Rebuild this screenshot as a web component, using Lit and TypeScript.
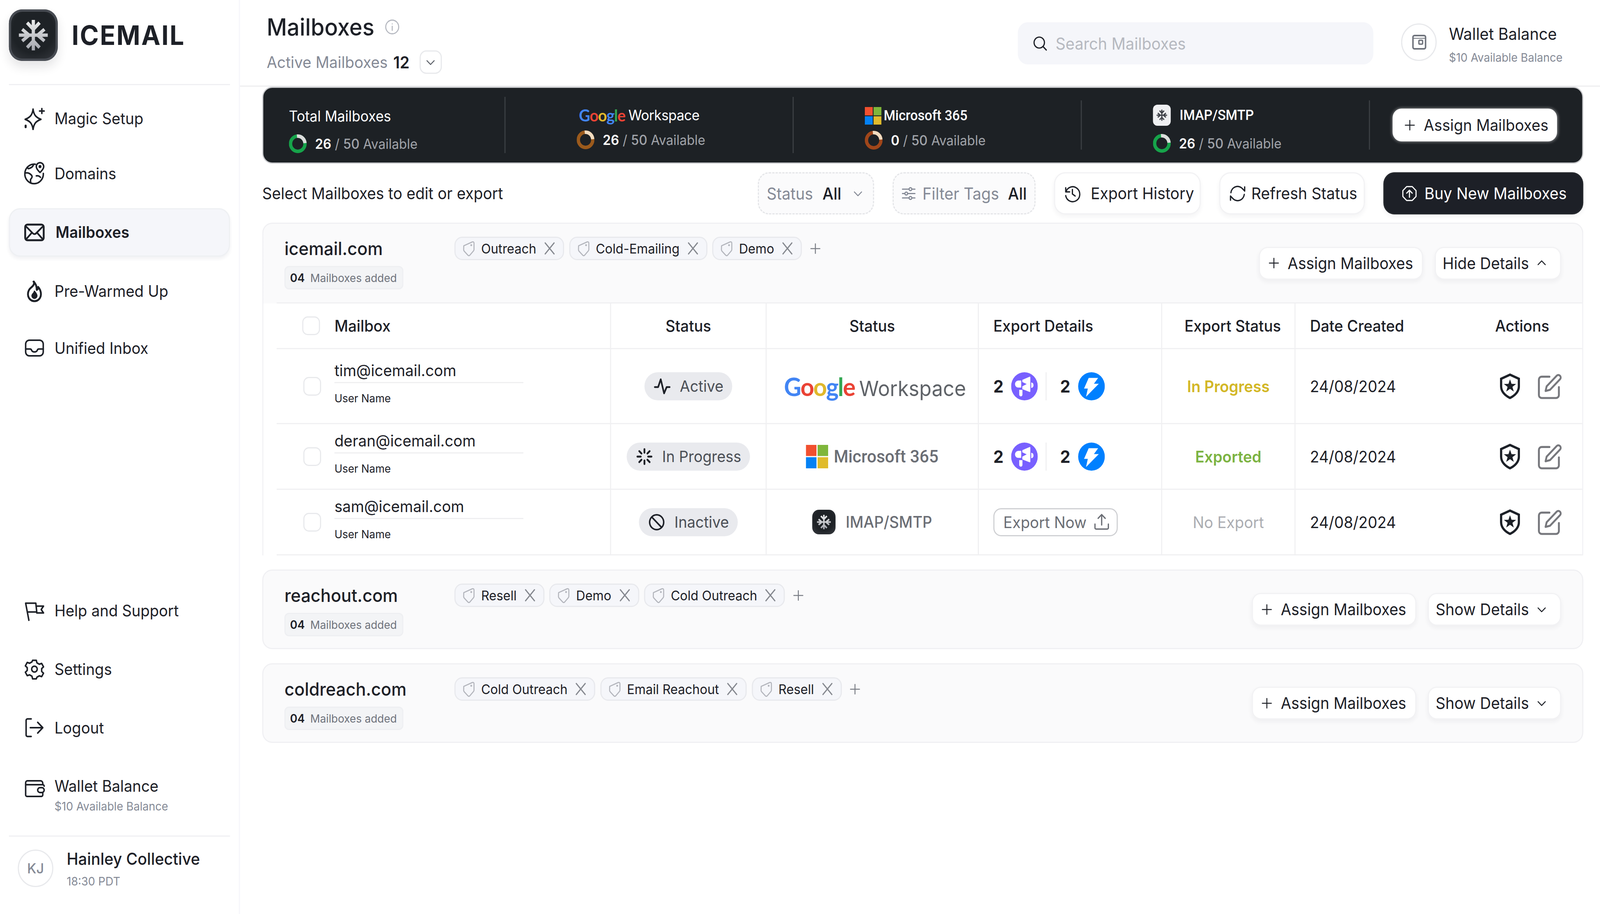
import {LitElement, css, html, svg, nothing} from 'lit';
import {customElement} from 'lit/decorators.js';

const ic = (size: number, body: unknown, vb = 24) =>
  html`<svg class="ic" width=${size} height=${size} viewBox="0 0 ${vb} ${vb}" fill="none" stroke="currentColor" stroke-width="1.6" stroke-linecap="round" stroke-linejoin="round">${body}</svg>`;

const icons = {
  magic: svg`<path d="M10.500 2.500c.8 6 3 8.500 8.500 10.500-5.500 2-7.700 4.500-8.500 10.500C9.700 17.500 7.500 15 2 13c5.500-2 7.700-4.500 8.500-10.500Z"/><path d="M20 2v5M17.500 4.500h5"/><path d="M2.500 19.500v1.500" stroke-width="2.200"/>`,
  globe: svg`<path d="M13 2.600A10 10 0 1 0 21.600 12"/><path d="M2.500 11.500c2.500-.5 4.500.5 6 2 1.500 1.300 1 3-.2 4-.8.8-.6 2-.3 3.800"/><path d="M11 2.800c-.5 2-1.500 3-3.500 3.700C6 7 5 8 4.500 5.500"/><path d="M14 14.500c2-.3 3.500.3 4.500 1.500"/><path d="M18 11s-4-3.300-4-6a4 4 0 0 1 8 0c0 2.700-4 6-4 6Z"/><circle cx="18" cy="5" r=".8"/>`,
  mail: svg`<rect x="2" y="4" width="20" height="16" rx="2.500" stroke-width="2"/><path d="m2.500 5.500 7.800 7.500a2.500 2.500 0 0 0 3.400 0l7.800-7.500M2.800 19.200 9 12.500M21.200 19.200 15 12.500" stroke-width="1.800"/>`,
  fire: svg`<path d="M11.500 2c.5 3-1 4.500-3 6C5.500 10.200 5 12.500 5 15a7 7 0 0 0 14 0c0-3-1-5.500-3-7.500 0 1.500-.5 2.500-1.500 3 0-3.500-1-6.500-3.500-8.500Z" stroke-width="2"/><path d="M12 12c.3 1.500-2.500 2.500-2.500 4.500a2.500 2.500 0 0 0 5 0c0-1.800-1.500-3-2.500-4.500Z" fill="currentColor"/>`,
  inbox: svg`<rect x="2.500" y="4" width="19" height="16" rx="4"/><path d="M2.500 13h4.800c.8 0 1.300.5 1.600 1.200.4 1 1.600 1.800 3.100 1.800s2.700-.8 3.100-1.800c.3-.7.8-1.200 1.600-1.200h4.800"/>`,
  flag: svg`<path d="M6 22 2.500 4.500h11l1 9h-9"/><path d="M13.800 7.500h8l-2.500 3.500 2.500 3.500h-7.300"/>`,
  gear: svg`<circle cx="12" cy="12" r="3"/><path d="M10 3h4l.7 2.600 2.500 1.400 2.600-.8 2 3.500-2 1.800v2.900l2 1.800-2 3.500-2.600-.8-2.500 1.400L14 22h-4l-.7-2.700-2.500-1.400-2.600.8-2-3.500 2-1.800v-2.900l-2-1.800 2-3.500 2.600.8 2.500-1.400L10 3Z"/>`,
  logout: svg`<path d="M8.500 3H4.500A1.500 1.500 0 0 0 3 4.500v15A1.500 1.500 0 0 0 4.500 21h4"/><path d="M7.500 12H21M15.500 6.500 21 12l-5.500 5.500"/>`,
  wallet: svg`<path d="M21 8V6.500A2.500 2.500 0 0 0 18.500 4H4.500A2 2 0 0 0 2.500 6v12.500a1.500 1.500 0 0 0 1.500 1.500h15.500a1.500 1.500 0 0 0 1.500-1.500V16"/><path d="M2.500 8H21a1.500 1.500 0 0 1 1.500 1.500"/><rect x="15.500" y="11" width="7" height="5" rx="2.500"/>`,
  search: svg`<circle cx="11" cy="11" r="7"/><path d="m20.500 20.500-4.500-4.500"/>`,
  down: svg`<path d="m6 9.500 6 6 6-6"/>`,
  up: svg`<path d="m6 14.500 6-6 6 6"/>`,
  plus: svg`<path d="M12 4.500v15M4.500 12h15"/>`,
  close: svg`<path d="m6 5 12 14M18 5 6 19"/>`,
  history: svg`<path d="M3.500 5v5h5"/><path d="M3.800 10a9 9 0 1 1-.3 4.500"/><path d="M12 7v5.500l3.500 2.500"/>`,
  refresh: svg`<path d="M3.500 11a8.500 8.500 0 0 1 15-4.500L21 9V4"/><path d="M20.500 13a8.500 8.500 0 0 1-15 4.500L3 15v5"/>`,
  buy: svg`<path d="m8 2.500h8l5.500 5.500v8L16 21.500H8L2.500 16V8L8 2.500Z"/><path d="M12 17V8M8 11.500 12 7.500l4 4"/>`,
  sliders: svg`<path d="M3 6h9M17 6h4M3 12h3M11 12h10M3 18h9M17 18h4"/><circle cx="14.500" cy="6" r="2"/><circle cx="8.500" cy="12" r="2"/><circle cx="14.500" cy="18" r="2"/>`,
  pulse: svg`<path d="M2 13h4.500L10 3l4.500 18 3.500-8h4" stroke-width="2.200"/>`,
  spin: svg`<path d="M12 2.500v4.500M12 17v4.500M5 5l3 3M16 16l3 3M2.500 12H7M17 12h4.500M5 19l3-3M16 8l3-3" stroke-width="2.400"/>`,
  ban: svg`<circle cx="12" cy="12" r="9.500" stroke-width="2"/><path d="m5.500 5.500 13 13" stroke-width="2"/>`,
  info: svg`<circle cx="12" cy="12" r="10"/><path d="M12 11v6M12 7.500v.1"/>`,
  upload: svg`<path d="M3.500 14.500V19a1.500 1.500 0 0 0 1.500 1.500h14a1.500 1.500 0 0 0 1.500-1.500v-4.500"/><path d="M12 15.500V3.500M7.500 7.500 12 3l4.500 4.500"/>`,
  topWallet: svg`<rect x="4" y="3.500" width="17" height="17" rx="2" stroke-width="2"/><path d="M4 7h17" stroke-width="1"/><rect x="12" y="9.500" width="5" height="5" rx="1" stroke-width="1.800"/>`,
};

const snow = (size: number, id = 'snowfill') => html`<svg class="snow" width=${size} height=${size} viewBox="0 0 44 44" fill="none" stroke="url(#${id})" stroke-width="2.900">
  <defs>
    <linearGradient id="snowfill" gradientUnits="userSpaceOnUse" x1="0" y1="9" x2="0" y2="35"><stop offset="0" stop-color="#eceded"/><stop offset="1" stop-color="#a3a5ad"/></linearGradient>
    <linearGradient id="snowdark" gradientUnits="userSpaceOnUse" x1="0" y1="9" x2="0" y2="35"><stop offset="0" stop-color="#33363c"/><stop offset="1" stop-color="#4a4d54"/></linearGradient>
  </defs>
  <path d="M22 9v26M9 22h26M16.400 11.400 22 17l5.600-5.600M16.400 32.600 22 27l5.600 5.600M12 17l6.100 5L12 27M32 17l-6.100 5 6.100 5"/></svg>`;

const ring = (color: string, light: string) => html`<svg class="ring" width="16" height="16" viewBox="0 0 16 16" fill="none" stroke-width="3">
  <circle cx="8" cy="8" r="6.500" stroke=${color}/>
  <circle cx="8" cy="8" r="6.500" stroke=${light} pathLength="100" stroke-dasharray="24 76" transform="rotate(-90 8 8)"/></svg>`;

const msTiles = (size: number) => html`<svg class="ms" width=${size} height=${size} viewBox="0 0 20 20">
  <rect width="9.500" height="9.500" fill="#f1502f"/><rect x="10.500" width="9.500" height="9.500" fill="#7fb63b"/>
  <rect y="10.500" width="9.500" height="9.500" fill="#0481f4"/><rect x="10.500" y="10.500" width="9.500" height="9.500" fill="#e0bb2c"/></svg>`;

const googleWord = html`<span class="google"><b class="g1">G</b><b class="g2">o</b><b class="g3">o</b><b class="g1">g</b><b class="g4">l</b><b class="g2">e</b></span>`;

const megaphone = html`<svg class="badge" width="24" height="24" viewBox="0 0 24 24">
  <circle cx="12" cy="12" r="12" fill="#7860ff"/>
  <path fill="#fff" d="M10.100 6.500 16.600 3.800q.7-.2.7.500V16.300q0 .7-.7.500L10.100 14.400V12L14 10.100 10.100 8.300Z"/>
  <path fill="#fff" d="M9.100 7.100H6.500a3 3 0 0 0 0 6h2.600ZM18.100 8.700a2.600 2.400 0 0 1 0 4.700ZM7.300 15h2.900v4.100a1.450 1.450 0 0 1-2.900 0Z"/></svg>`;

const bolt = html`<svg class="badge" width="24" height="24" viewBox="0 0 24 24">
  <circle cx="12" cy="12" r="12" fill="#0080ff"/>
  <path fill="#fff" d="M9.500 4.800H18L14.200 9.800H18.600L7.100 20.900 8.700 13.900H5.300Z"/></svg>`;

const shield = html`<svg width="18" height="22" viewBox="0 0 18 22" fill="none">
  <path d="M9 1.100 17 4.600V11c0 4.300-3.300 7.800-8 9.900C4.300 18.800 1 15.300 1 11V4.600Z" stroke="#1c2027" stroke-width="2"/>
  <path fill="#1c2027" d="m9 5 1.400 3.900 4.100.1-3.300 2.500 1.200 4L9 13.200l-3.400 2.300 1.200-4L3.500 9l4.100-.1Z"/></svg>`;

const edit = html`<svg width="22" height="22" viewBox="0 0 22 22" fill="none" stroke="#77787d" stroke-width="1.700" stroke-linecap="round" stroke-linejoin="round">
  <path d="M10.500 2.800h-7A2.500 2.500 0 0 0 1 5.300v13.200A2.500 2.500 0 0 0 3.500 21h13a2.500 2.500 0 0 0 2.500-2.500v-6.800"/>
  <path d="M7 15l1-4 9-9a2 2 0 0 1 3 3l-9 9Z"/></svg>`;

const tagIcon = html`<svg class="tag-ic" width="12" height="14" viewBox="0 0 13 14" fill="none" stroke="#b3b5bc" stroke-width="1" stroke-linejoin="round">
  <path d="M1.500 4.600 9.800 1q1.700-.4 1.700 1.200V8q0 .8-.6 1.400l-3.500 3.900q-.9.800-1.800 0L2 9.600q-.6-.6-.6-1.400Z"/><circle cx="8.800" cy="4" r=".4" fill="#b3b5bc"/></svg>`;

type Domain = {name: string; tags: string[]; open?: boolean};

const domains: Domain[] = [
  {name: 'icemail.com', tags: ['Outreach', 'Cold-Emailing', 'Demo'], open: true},
  {name: 'reachout.com', tags: ['Resell', 'Demo', 'Cold Outreach']},
  {name: 'coldreach.com', tags: ['Cold Outreach', 'Email Reachout', 'Resell']},
];

const rows = [
  {email: 'tim@icemail.com', status: 'Active', icon: icons.pulse, provider: 'google', exportState: 'In Progress', cls: 'st-prog', tall: true},
  {email: 'deran@icemail.com', status: 'In Progress', icon: icons.spin, provider: 'ms', exportState: 'Exported', cls: 'st-done'},
  {email: 'sam@icemail.com', status: 'Inactive', icon: icons.ban, provider: 'imap', exportState: 'No Export', cls: 'st-none'},
];

// design width is 1440 x 780 at 3x, the real window may be a bit narrower
const fitX = Math.min(1, window.innerWidth / 4320);

@customElement('app-root')
export class AppRoot extends LitElement {
  static styles = css`
    :host {
      display: block;
      zoom: 3;
      height: 780px;
      overflow: hidden;
      background: #fff;
      color: #1d2027;
      font-family: Inter, 'Noto Sans', sans-serif;
      font-size: 13.600px;
    }
    svg { display: block; flex: none; }
    .app { display: flex; width: 1440px; height: 780px; transform-origin: 0 0; }

    /* sidebar */
    .side {
      width: 216px;
      flex: none;
      box-sizing: border-box;
      border-right: 1px solid #f6f6fa;
      padding: 0 8px;
      display: flex;
      flex-direction: column;
      font-size: 13.500px;
    }
    .brand {
      height: 72.500px;
      box-sizing: border-box;
      padding-top: 8px;
      display: flex;
      align-items: flex-start;
      gap: 12.500px;
      border-bottom: 1px solid #f0f0f3;
    }
    .logo {
      width: 44px;
      height: 44px;
      border-radius: 12px;
      background: radial-gradient(circle at 50% 42%, #1e2226 55%, #3a3d43 100%);
      box-shadow: inset 0 0 0 2px #484c53, 0 5px 9px rgba(30, 34, 40, 0.12);
      display: flex;
    }
    .logo.small { width: 21px; height: 21px; border-radius: 6px; box-shadow: none; }
    .brand-name { line-height: 44px; font-size: 23px; font-weight: 700; letter-spacing: 0.950px; }
    .nav { margin-top: 5px; display: flex; flex-direction: column; }
    .nav-item {
      height: 47px;
      display: flex;
      align-items: center;
      gap: 8px;
      padding-left: 13px;
      box-sizing: border-box;
    }
    .nav-item.active {
      height: 41.500px;
      margin: 6px 0;
      gap: 9px;
      font-weight: 600;
      background: #f5f6fa;
      border: 1px solid #eef0f3;
      border-radius: 10px;
      box-shadow: 0 2px 3px rgba(30, 34, 60, 0.06);
      padding-left: 12px;
    }
    .nav-item.last { margin-top: 1.500px; }
    .nav.bottom { margin-top: auto; }
    .nav.bottom .nav-item { height: 50px; }
    .nav.bottom .nav-item.wallet { align-items: flex-start; height: 67px; padding-top: 17px; }
    .wallet-title { line-height: 16px; }
    .wallet-sub { font-size: 10px; color: #858a96; margin-top: 2px; line-height: 14px; }
    .user {
      height: 67px;
      box-sizing: border-box;
      border-top: 1px solid #f0f0f3;
      display: flex;
      align-items: flex-start;
      gap: 12px;
      padding: 11px 0 0 8px;
    }
    .avatar {
      width: 32px;
      height: 32px;
      box-sizing: border-box;
      border: 1px solid #e8e9ec;
      border-radius: 50%;
      display: flex;
      align-items: center;
      justify-content: center;
      font-size: 12px;
      font-weight: 500;
      color: #858a96;
    }
    .user-name { font-size: 14px; font-weight: 500; line-height: 18px; margin-top: -1px; }
    .user-time { font-size: 10px; color: #858a96; margin-top: 3px; line-height: 14px; }

    /* top bar */
    .main { flex: 1; min-width: 0; display: flex; flex-direction: column; }
    .top {
      height: 74px;
      flex: none;
      box-sizing: border-box;
      border-bottom: 1px solid #eeeef0;
      padding-left: 24px;
      display: flex;
      align-items: flex-start;
    }
    .top-left { width: 676px; flex: none; padding-top: 9px; }
    .title-row { display: flex; align-items: center; gap: 9px; height: 28px; }
    .title { font-size: 20px; font-weight: 500; }
    .info { color: #b4b7bf; }
    .active-row { display: flex; align-items: center; height: 20px; margin-top: 6px; color: #858a96; font-size: 13.600px; }
    .active-row b { color: #1d2027; font-weight: 600; font-size: 14px; margin-left: 5px; }
    .chev-box {
      width: 20px;
      height: 20px;
      margin-left: 9px;
      box-sizing: border-box;
      border: 1px solid #e8e9ec;
      border-radius: 6px;
      display: flex;
      align-items: center;
      justify-content: center;
      color: #5c6068;
    }
    .search {
      width: 320px;
      height: 36px;
      margin-top: 19px;
      box-sizing: border-box;
      padding-left: 12px;
      border-radius: 9px;
      background: #f5f6fa;
      display: flex;
      align-items: center;
      gap: 6px;
      color: #b6b9c0;
      font-size: 14px;
    }
    .search svg { color: #1d2027; }
    .top-wallet { margin: 20px 0 0 25px; display: flex; gap: 11px; }
    .circle {
      width: 32px;
      height: 32px;
      box-sizing: border-box;
      border: 1px solid #e8e9ec;
      border-radius: 50%;
      display: flex;
      align-items: center;
      justify-content: center;
      color: #6f737c;
    }
    .top-wallet .w1 { font-size: 14px; line-height: 18px; }
    .top-wallet .w2 { font-size: 10px; line-height: 14px; color: #858a96; margin-top: 4px; }

    .content { padding: 0 15px 0 20px; }

    /* summary bar */
    .bar {
      height: 65.500px;
      box-sizing: border-box;
      background: #1d2125;
      border: 1px solid #c9cacd;
      border-radius: 9px;
      display: flex;
      align-items: center;
      color: #fff;
    }
    .sec {
      width: 259.300px;
      height: 42px;
      flex: none;
      box-sizing: border-box;
      border-right: 1px solid #3b3f43;
      padding-left: 64px;
      display: flex;
      flex-direction: column;
      justify-content: center;
      gap: 4px;
    }
    .sec.first { width: 218px; height: 48px; padding: 8px 0 0 23px; gap: 7px; }
    .sec.ms { padding-top: 4px; }
    .sec.imap { gap: 7px; padding-top: 6px; }
    .sec.g { height: 48px; padding-top: 3px; }
    .sec-title { display: flex; align-items: center; font-size: 12.500px; height: 18px; gap: 3px; }
    .sec-title.ws { font-size: 12.300px; letter-spacing: -0.2px; padding-left: 2px; }
    .sec-title.ws .google { font-size: 14px; letter-spacing: -0.5px; }
    .sec-title.med { font-family: Roboto, sans-serif; font-size: 12px; font-weight: 500; gap: 2px; }
    .sec-title .mini { margin-right: 6px; }
    .avail { display: flex; align-items: center; gap: 7.500px; font-size: 11.600px; height: 16px; color: #a0a3a9; }
    .avail b { color: #fff; font-weight: 600; }
    .avail i { font-style: normal; font-weight: 500; }
    .mini {
      width: 16px;
      height: 18px;
      border-radius: 4px;
      background: #eeeff1;
      display: flex;
      align-items: center;
      justify-content: center;
    }
    .google { display: inline-flex; font-family: Lato, sans-serif; }
    .google b { font-weight: 700; }
    .g1 { color: #4285f4; }
    .g2 { color: #ea4335; }
    .g3 { color: #e0b82c; }
    .g4 { color: #34a853; }

    /* buttons */
    .btn {
      display: inline-flex;
      align-items: center;
      gap: 6px;
      box-sizing: border-box;
      height: 28px;
      padding: 0 8px 0 6px;
      background: #fff;
      border: 1px solid #f2f2f4;
      border-radius: 8px;
      box-shadow: 0 2px 4px rgba(30, 34, 60, 0.05);
      font-size: 13.700px;
      white-space: nowrap;
    }
    .btn.details { padding: 0 10px 0 6px; gap: 5px; }
    .bar .btn { margin-left: 20.500px; color: #1d2027; border: none; box-shadow: 0 0 3px rgba(255, 255, 255, 0.6); width: 148px; padding-left: 9px; font-size: 13.600px; }
    .toolbar { display: flex; align-items: center; gap: 16.500px; height: 36px; margin: 7.500px 0 7px; }
    .toolbar .label { flex: 1; font-size: 13.700px; }
    .toolbar .btn { height: 36px; border-radius: 10px; font-size: 13.800px; padding: 0 7px; }
    .toolbar .btn.hist { gap: 8px; padding-right: 5px; }
    .toolbar .btn.refresh { gap: 4px; padding-right: 6px; }
    .toolbar .btn.dark { background: #1d2027; color: #fff; border-color: #26292e; padding: 0 14px 0 15px; }
    .dash {
      display: inline-flex;
      align-items: center;
      gap: 8.500px;
      height: 36px;
      box-sizing: border-box;
      padding: 0 7px;
      background: #fbfbfc;
      border: 1px dashed #e4e5e8;
      border-radius: 10px;
      font-size: 14px;
      color: #858a96;
    }
    .dash.filter { padding-left: 6px; gap: 8px; }
    .dash b { font-weight: 500; color: #1d2027; }
    .dash .lead { display: flex; align-items: center; gap: 5px; }

    /* cards */
    .card {
      background: #fafafb;
      border: 1px solid #f0f0f3;
      border-radius: 9px;
      margin-bottom: 12px;
      box-sizing: border-box;
    }
    .card.open {
      background: linear-gradient(#fafafb 68px, #fff 68px);
      border-bottom: none;
      border-radius: 9px 9px 0 0;
    }
    .head { height: 66px; box-sizing: border-box; padding: 0 19px; display: flex; }
    .open .head { height: 67px; }
    .head-left { width: 153px; flex: none; padding-top: 10px; }
    .domain { font-size: 15.400px; font-weight: 500; line-height: 22px; }
    .count {
      display: inline-flex;
      align-items: center;
      gap: 5px;
      height: 20px;
      margin-top: 4px;
      padding: 0 5px 0 4px;
      box-sizing: border-box;
      background: #f3f4f6;
      border: 1px solid #eeeff2;
      border-radius: 4px;
      font-size: 9.700px;
      color: #6f737c;
    }
    .count b { color: #1d2027; font-weight: 600; font-size: 10px; }
    .tags { display: flex; align-items: center; align-self: flex-start; gap: 4.500px; margin-top: 11px; }
    .tag {
      display: inline-flex;
      align-items: center;
      gap: 5px;
      height: 20px;
      box-sizing: border-box;
      padding: 0 8px 0 6px;
      background: #f5f6fa;
      border: 1px solid #e8e9ed;
      border-radius: 7px;
      font-size: 11.400px;
      white-space: nowrap;
    }
    .tag svg.ic { color: #85888f; margin: 0 -4px 0 -1px; }
    .add { color: #7a7d85; margin-left: 1px; }
    .head-actions { margin-left: auto; align-self: center; display: flex; gap: 10.500px; }

    /* table */
    .table { margin-left: 12px; border-top: 1px solid #f0f0f2; background: #fff; }
    .tr {
      display: grid;
      grid-template-columns: 301px 140px 191px 165px 120px 170px 1fr;
      height: 56px;
      box-sizing: border-box;
      border-bottom: 1px solid #f0f0f2;
    }
    .tr.hd { height: 39px; }
    .tr.tall { height: 64px; }
    .td {
      border-right: 1px solid #f0f0f2;
      display: flex;
      align-items: center;
      box-sizing: border-box;
      min-width: 0;
    }
    .td.date, .td:last-child { border-right: none; }
    .center { justify-content: center; }
    .pad { padding-left: 13px; }
    .hd .td { font-weight: 500; font-size: 13.500px; }
    .hd .exp { padding-left: 20px; }
    .hd .act { padding-left: 9.600px; }
    .mbx { gap: 12px; padding-left: 24px; }
    .hd .mbx { padding-left: 23px; gap: 13px; }
    .check {
      width: 16px;
      height: 16px;
      flex: none;
      box-sizing: border-box;
      border: 1px solid #e8e9ec;
      border-radius: 5px;
      background: #fff;
    }
    .who { margin-top: -5px; }
    .email { width: 170px; line-height: 18px; padding-bottom: 1px; border-bottom: 1px solid #efeff1; }
    .uname { font-size: 9.600px; line-height: 14px; margin-top: 6px; }
    .pill {
      display: inline-flex;
      align-items: center;
      gap: 8px;
      height: 24px;
      padding: 0 8px;
      border-radius: 12px;
      background: #e9eaee;
      color: #4b4f56;
      font-size: 13.300px;
    }
    .pill svg { color: #1d2027; }
    .logo-g { display: flex; align-items: baseline; font-size: 18px; color: #5f6368; gap: 4px; padding-left: 5px; }
    .logo-g .google { font-size: 21.500px; letter-spacing: -0.8px; }
    .logo-row { display: flex; align-items: center; gap: 5px; font-family: Roboto, sans-serif; font-size: 15px; font-weight: 500; color: #6b6e75; }
    .logo-row.imap { font-family: Inter, sans-serif; font-size: 13.500px; gap: 9px; }
    .badge-row { display: flex; align-items: center; gap: 7px; font-weight: 700; font-size: 14.500px; }
    .badge-row .sep { width: 1px; height: 24px; background: #efeff1; margin: 0 5px 0 0; }
    .export-btn {
      display: inline-flex;
      align-items: center;
      gap: 5px;
      height: 24px;
      padding: 0 5px 0 8px;
      box-sizing: border-box;
      border: 1px solid #cfd0d3;
      border-radius: 7px;
      color: #6b6e75;
    }
    .st-prog { color: #d3b726; font-weight: 600; }
    .st-done { color: #7cb342; font-weight: 600; }
    .st-none { color: #abadb2; }
    .actions { padding-left: 14px; gap: 16px; }
  `;

  private provider(kind: string) {
    if (kind === 'google') {
      return html`<div class="logo-g">${googleWord}<span>Workspace</span></div>`;
    }
    if (kind === 'ms') {
      return html`<div class="logo-row">${msTiles(20)}<span>Microsoft 365</span></div>`;
    }
    return html`<div class="logo-row imap"><div class="logo small">${snow(21)}</div><span>IMAP/SMTP</span></div>`;
  }

  private table() {
    return html`<div class="table">
      <div class="tr hd">
        <div class="td mbx"><span class="check"></span>Mailbox</div>
        <div class="td center">Status</div>
        <div class="td center">Status</div>
        <div class="td pad">Export Details</div>
        <div class="td exp">Export Status</div>
        <div class="td date pad">Date Created</div>
        <div class="td act">Actions</div>
      </div>
      ${rows.map(
        (r) => html`<div class="tr ${r.tall ? 'tall' : ''}">
          <div class="td mbx">
            <span class="check"></span>
            <div class="who"><div class="email">${r.email}</div><div class="uname">User Name</div></div>
          </div>
          <div class="td center"><span class="pill">${ic(16, r.icon)}${r.status}</span></div>
          <div class="td center">${this.provider(r.provider)}</div>
          <div class="td pad">
            ${r.provider === 'imap'
              ? html`<span class="export-btn">Export Now ${ic(17, icons.upload)}</span>`
              : html`<div class="badge-row">2 ${megaphone}<span class="sep"></span>2 ${bolt}</div>`}
          </div>
          <div class="td center"><span class=${r.cls}>${r.exportState}</span></div>
          <div class="td date pad">24/08/2024</div>
          <div class="td actions">${shield}${edit}</div>
        </div>`
      )}
    </div>`;
  }

  private card(d: Domain) {
    return html`<section class="card ${d.open ? 'open' : ''}">
      <div class="head">
        <div class="head-left">
          <div class="domain">${d.name}</div>
          <div class="count"><b>04</b> Mailboxes added</div>
        </div>
        <div class="tags">
          ${d.tags.map((t) => html`<span class="tag">${tagIcon}${t}${ic(16, icons.close)}</span>`)}
          <span class="add">${ic(13, icons.plus)}</span>
        </div>
        <div class="head-actions">
          <span class="btn">${ic(13, icons.plus)}Assign Mailboxes</span>
          <span class="btn details">${d.open ? 'Hide Details' : 'Show Details'}${ic(13, d.open ? icons.up : icons.down)}</span>
        </div>
      </div>
      ${d.open ? this.table() : nothing}
    </section>`;
  }

  render() {
    return html`<div class="app" style="transform: scaleX(${fitX})">
      <aside class="side">
        <div class="brand">
          <div class="logo">${snow(44)}</div>
          <div class="brand-name">ICEMAIL</div>
        </div>
        <nav class="nav">
          <div class="nav-item">${ic(20, icons.magic)}Magic Setup</div>
          <div class="nav-item">${ic(20, icons.globe)}Domains</div>
          <div class="nav-item active">${ic(20, icons.mail)}Mailboxes</div>
          <div class="nav-item">${ic(20, icons.fire)}Pre-Warmed Up</div>
          <div class="nav-item last">${ic(20, icons.inbox)}Unified Inbox</div>
        </nav>
        <nav class="nav bottom">
          <div class="nav-item">${ic(20, icons.flag)}Help and Support</div>
          <div class="nav-item">${ic(20, icons.gear)}Settings</div>
          <div class="nav-item">${ic(20, icons.logout)}Logout</div>
          <div class="nav-item wallet">${ic(20, icons.wallet)}
            <div><div class="wallet-title">Wallet Balance</div><div class="wallet-sub">$10 Available Balance</div></div>
          </div>
        </nav>
        <div class="user">
          <div class="avatar">KJ</div>
          <div><div class="user-name">Hainley Collective</div><div class="user-time">18:30 PDT</div></div>
        </div>
      </aside>
      <main class="main">
        <header class="top">
          <div class="top-left">
            <div class="title-row"><span class="title">Mailboxes</span><span class="info">${ic(14, icons.info)}</span></div>
            <div class="active-row">Active Mailboxes <b>12</b><span class="chev-box">${ic(13, icons.down)}</span></div>
          </div>
          <div class="search">${ic(16, icons.search)}Search Mailboxes</div>
          <div class="top-wallet">
            <div class="circle">${ic(16, icons.topWallet)}</div>
            <div><div class="w1">Wallet Balance</div><div class="w2">$10 Available Balance</div></div>
          </div>
        </header>
        <div class="content">
          <div class="bar">
            <div class="sec first">
              <div class="sec-title">Total Mailboxes</div>
              <div class="avail">${ring('#16a34a', '#dcdcdc')}<span><b>26</b> / <i>50</i> Available</span></div>
            </div>
            <div class="sec g">
              <div class="sec-title ws">${googleWord}<span>Workspace</span></div>
              <div class="avail">${ring('#9b5a1c', '#f2dcc0')}<span><b>26</b> / <i>50</i> Available</span></div>
            </div>
            <div class="sec ms">
              <div class="sec-title med">${msTiles(15)}<span>Microsoft 365</span></div>
              <div class="avail">${ring('#a0461a', '#f2dcc0')}<span><b>0</b> / <i>50</i> Available</span></div>
            </div>
            <div class="sec imap">
              <div class="sec-title med"><span class="mini">${snow(16, 'snowdark')}</span><span>IMAP/SMTP</span></div>
              <div class="avail">${ring('#16a34a', '#dcdcdc')}<span><b>26</b> / <i>50</i> Available</span></div>
            </div>
            <span class="btn">${ic(13, icons.plus)}Assign Mailboxes</span>
          </div>
          <div class="toolbar">
            <div class="label">Select Mailboxes to edit or export</div>
            <span class="dash">Status <b>All</b>${ic(13, icons.down)}</span>
            <span class="dash filter"><span class="lead">${ic(15, icons.sliders)}Filter Tags</span> <b>All</b></span>
            <span class="btn hist">${ic(17, icons.history)}Export History</span>
            <span class="btn refresh">${ic(17, icons.refresh)}Refresh Status</span>
            <span class="btn dark">${ic(15, icons.buy)}Buy New Mailboxes</span>
          </div>
          ${domains.map((d) => this.card(d))}
        </div>
      </main>
    </div>`;
  }
}
